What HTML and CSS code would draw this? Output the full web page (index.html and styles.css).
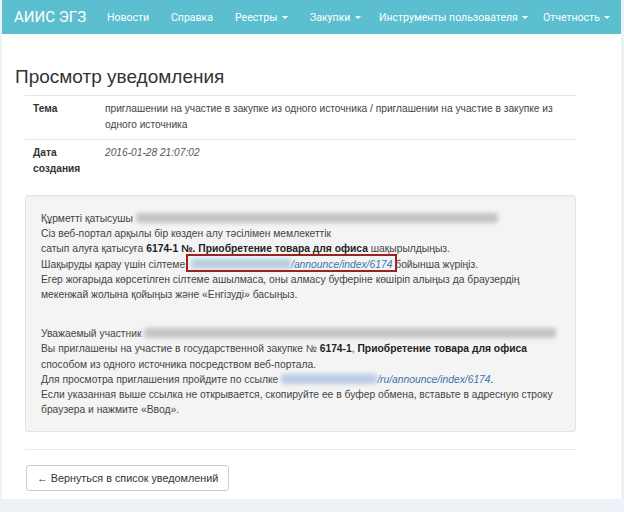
FILE: index.html
```html
<!DOCTYPE html>
<html lang="ru">
<head>
<meta charset="utf-8">
<title>Просмотр уведомления</title>
<link rel="stylesheet" href="styles.css">
</head>
<body>
<div class="page">
  <nav class="navbar">
    <span class="brand">АИИС ЭГЗ</span>
    <ul class="nav">
      <li>Новости</li>
      <li>Справка</li>
      <li>Реестры <span class="caret"></span></li>
      <li>Закупки <span class="caret"></span></li>
      <li>Инструменты пользователя <span class="caret"></span></li>
      <li>Отчетность <span class="caret"></span></li>
    </ul>
  </nav>
  <main class="content">
    <h1 class="title">Просмотр уведомления</h1>
    <table class="info">
      <tr>
        <th>Тема</th>
        <td>приглашении на участие в закупке из одного источника / приглашении на участие в закупке из одного источника</td>
      </tr>
      <tr class="last">
        <th>Дата создания</th>
        <td><em>2016-01-28 21:07:02</em></td>
      </tr>
    </table>
    <div class="well">
      <p class="msg">Құрметті қатысушы <span class="blur blur-kz"></span><br>
      Сіз веб-портал арқылы бір көзден алу тәсілімен мемлекеттік<br>
      сатып алуға қатысуға <b>6174-1 №. Приобретение товара для офиса</b> шақырылдыңыз.<br>
      Шақыруды қарау үшін сілтеме <span class="boxed"><span class="blur link-blur link-blur-kz"></span><a class="link">/announce/index/6174</a></span> бойынша жүріңіз.<br>
      Егер жоғарыда көрсетілген сілтеме ашылмаса, оны алмасу буферіне көшіріп алыңыз да браузердің<br>
      мекенжай жолына қойыңыз және «Енгізуді» басыңыз.</p>
      <p class="msg ru">Уважаемый участник <span class="blur blur-ru"></span><br>
      Вы приглашены на участие в государственной закупке № <b>6174-1</b>, <b>Приобретение товара для офиса</b><br>
      способом из одного источника посредством веб-портала.<br>
      Для просмотра приглашения пройдите по ссылке <span class="blur link-blur link-blur-ru"></span><a class="link">/ru/announce/index/6174</a>.<br>
      Если указанная выше ссылка не открывается, скопируйте ее в буфер обмена, вставьте в адресную строку<br>
      браузера и нажмите «Ввод».</p>
    </div>
    <div class="actions">
      <button class="btn">← Вернуться в список уведомлений</button>
    </div>
  </main>
</div>
</body>
</html>
```
FILE: styles.css
```css
html, body {
  margin: 0;
  padding: 0;
}
body {
  background: #edf1f8;
  font-family: "Liberation Sans", Arial, sans-serif;
  color: #333;
  height: 512px;
  overflow: hidden;
}
.page {
  width: 619px;
  margin-left: 2px;
  background: #fff;
  padding-bottom: 8px;
}
.navbar {
  height: 34px;
  background: #5bbfcf;
  display: flex;
  align-items: center;
  color: #fff;
  white-space: nowrap;
}
.brand {
  font-family: Roboto, "Liberation Sans", sans-serif;
  font-size: 15px;
  margin-left: 12px;
  width: 93px;
}
.nav {
  list-style: none;
  display: flex;
  margin: 0;
  padding: 0;
  font-family: Roboto, "Liberation Sans", sans-serif;
  font-size: 10.5px;
}
.nav li:nth-child(1) { width: 64px; }
.nav li:nth-child(2) { width: 64px; }
.nav li:nth-child(3) { width: 75px; }
.nav li:nth-child(4) { width: 69px; }
.nav li:nth-child(5) { width: 164px; }
.caret {
  display: inline-block;
  width: 0;
  height: 0;
  border-top: 3px solid #fff;
  border-left: 3px solid transparent;
  border-right: 3px solid transparent;
  vertical-align: middle;
  margin-left: 2px;
}
.content {
  padding: 0 44px 0 13px;
}
.title {
  font-weight: normal;
  font-size: 19px;
  margin: 0;
  padding: 32px 0 7px 0;
  color: #333;
}
.info {
  margin-left: 10px;
  width: 551px;
  border-collapse: collapse;
  font-size: 10.2px;
  line-height: 16px;
}
.info th, .info td {
  border-top: 1px solid #e6e6e6;
  vertical-align: top;
  text-align: left;
  padding: 5px 8px 6px 8px;
}
.info th {
  width: 56px;
  font-weight: bold;
}
.info td {
  color: #444;
}
.info em {
  color: #555;
}
.info .last td, .info .last th {
  padding-bottom: 3px;
}
.well {
  margin: 15px 0 0 10px;
  width: 519px;
  background: #f4f4f4;
  border: 1px solid #e3e3e3;
  border-radius: 3px;
  padding: 15px 15px 14px 15px;
  box-shadow: inset 0 1px 1px rgba(0,0,0,0.03);
}
.msg {
  margin: 0;
  font-size: 10.3px;
  line-height: 15.2px;
  white-space: nowrap;
  color: #444;
}
.msg b {
  color: #222;
}
.msg.ru {
  margin-top: 24px;
}
.blur {
  display: inline-block;
  height: 10px;
  vertical-align: -1px;
  background: #c4c4c4;
  filter: blur(2px);
  border-radius: 3px;
}
.blur-kz { width: 362px; }
.blur-ru { width: 412px; }
.link-blur {
  background: #b9cde2;
}
.link-blur-kz { width: 100px; margin-left: 3px; }
.link-blur-ru { width: 96px; }
.link {
  color: #3a73ad;
  font-style: italic;
}
.boxed {
  position: relative;
}
.boxed::after {
  content: "";
  position: absolute;
  left: -2px;
  right: -5px;
  top: -5px;
  bottom: -2px;
  border: 2px solid #9c2222;
}
.actions {
  margin: 17px 0 0 10px;
  width: 551px;
  border-top: 1px solid #eaeaea;
  padding-top: 15px;
}
.btn {
  font-family: "Liberation Sans", Arial, sans-serif;
  font-size: 10.8px;
  color: #333;
  background: #fff;
  border: 1px solid #ccc;
  border-radius: 3px;
  height: 26px;
  padding: 0 10px;
  margin-left: 1px;
}
```
